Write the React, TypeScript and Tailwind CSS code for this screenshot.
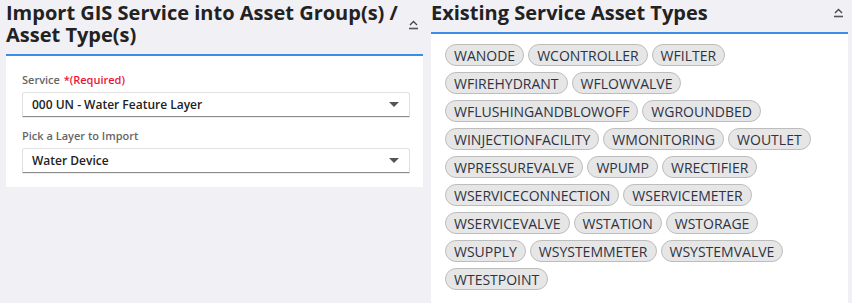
import React from 'react';

const assetTypes = [
  'WANODE', 'WCONTROLLER', 'WFILTER', 'WFIREHYDRANT', 'WFLOWVALVE',
  'WFLUSHINGANDBLOWOFF', 'WGROUNDBED', 'WINJECTIONFACILITY', 'WMONITORING',
  'WOUTLET', 'WPRESSUREVALVE', 'WPUMP', 'WRECTIFIER', 'WSERVICECONNECTION',
  'WSERVICEMETER', 'WSERVICEVALVE', 'WSTATION', 'WSTORAGE', 'WSUPPLY',
  'WSYSTEMMETER', 'WSYSTEMVALVE', 'WTESTPOINT',
];

function CollapseIcon() {
  return (
    <svg width="11" height="10" viewBox="0 0 11 10" className="shrink-0">
      <path d="M2 5 L5.5 1.5 L9 5" fill="none" stroke="#444" strokeWidth="1.3" />
      <path d="M1 8.5 H10" stroke="#555" strokeWidth="1.6" />
    </svg>
  );
}

function SelectBox({ value }: { value: string }) {
  return (
    <div className="flex items-center justify-between h-[25px] pl-[9px] pr-[10px] bg-white border border-[#e2e2e2] border-b-[#8a8a8a] rounded-t-[3px] shadow-[0_1px_1px_rgba(0,0,0,0.08)]">
      <span className="text-[12px] font-semibold text-[#222]">{value}</span>
      <svg width="10" height="5" viewBox="0 0 10 5">
        <path d="M0 0 H10 L5 5 Z" fill="#555" />
      </svg>
    </div>
  );
}

export default function App() {
  return (
    <div
      className="w-[852px] h-[303px] bg-[#f1f0f5] flex gap-2 pl-[6px] overflow-hidden"
      style={{ fontFamily: '"Open Sans", "Noto Sans", sans-serif' }}
    >
      {/* left panel */}
      <div className="w-[417px] flex flex-col">
        <div className="flex items-center justify-between pt-[2px] pb-[8px] border-b-2 border-[#3a8ee6]">
          <h2 className="text-[20px] leading-[22px] font-bold text-[#222]">
            <span className="block">Import GIS Service into Asset Group(s) /</span>
            <span className="block">Asset Type(s)</span>
          </h2>
          <div className="mr-[4px] mt-[2px]">
            <CollapseIcon />
          </div>
        </div>
        <div className="bg-white pl-4 pr-[13px] pt-[16px] pb-[14px] flex flex-col">
          <label className="text-[11px] font-semibold text-[#666] mb-[4px] leading-[16px]">
            Service <span className="text-[#e8173a] ml-[1px]">*(Required)</span>
          </label>
          <SelectBox value="000 UN - Water Feature Layer" />
          <label className="text-[11px] font-semibold text-[#666] mt-[11px] mb-[4px] leading-[16px]">
            Pick a Layer to Import
          </label>
          <SelectBox value="Water Device" />
        </div>
      </div>

      {/* right panel */}
      <div className="w-[417px] flex flex-col">
        <div className="flex items-center justify-between pt-[2px] pb-[8px] border-b-2 border-[#3a8ee6]">
          <h2 className="text-[20px] leading-[22px] font-bold text-[#222]">Existing Service Asset Types</h2>
          <div className="mr-[4px]">
            <CollapseIcon />
          </div>
        </div>
        <div className="flex-1 bg-white pl-[14px] pr-3 pt-[10px]">
          <div className="flex flex-wrap gap-x-[4px] gap-y-[6px]">
            {assetTypes.map((t) => (
              <span
                key={t}
                className="h-[22px] px-[8px] flex items-center rounded-full bg-[#e6e6e6] border border-[#bdbdbd] text-[14px] text-[#2e3344]"
              >
                {t}
              </span>
            ))}
          </div>
        </div>
      </div>
    </div>
  );
}
